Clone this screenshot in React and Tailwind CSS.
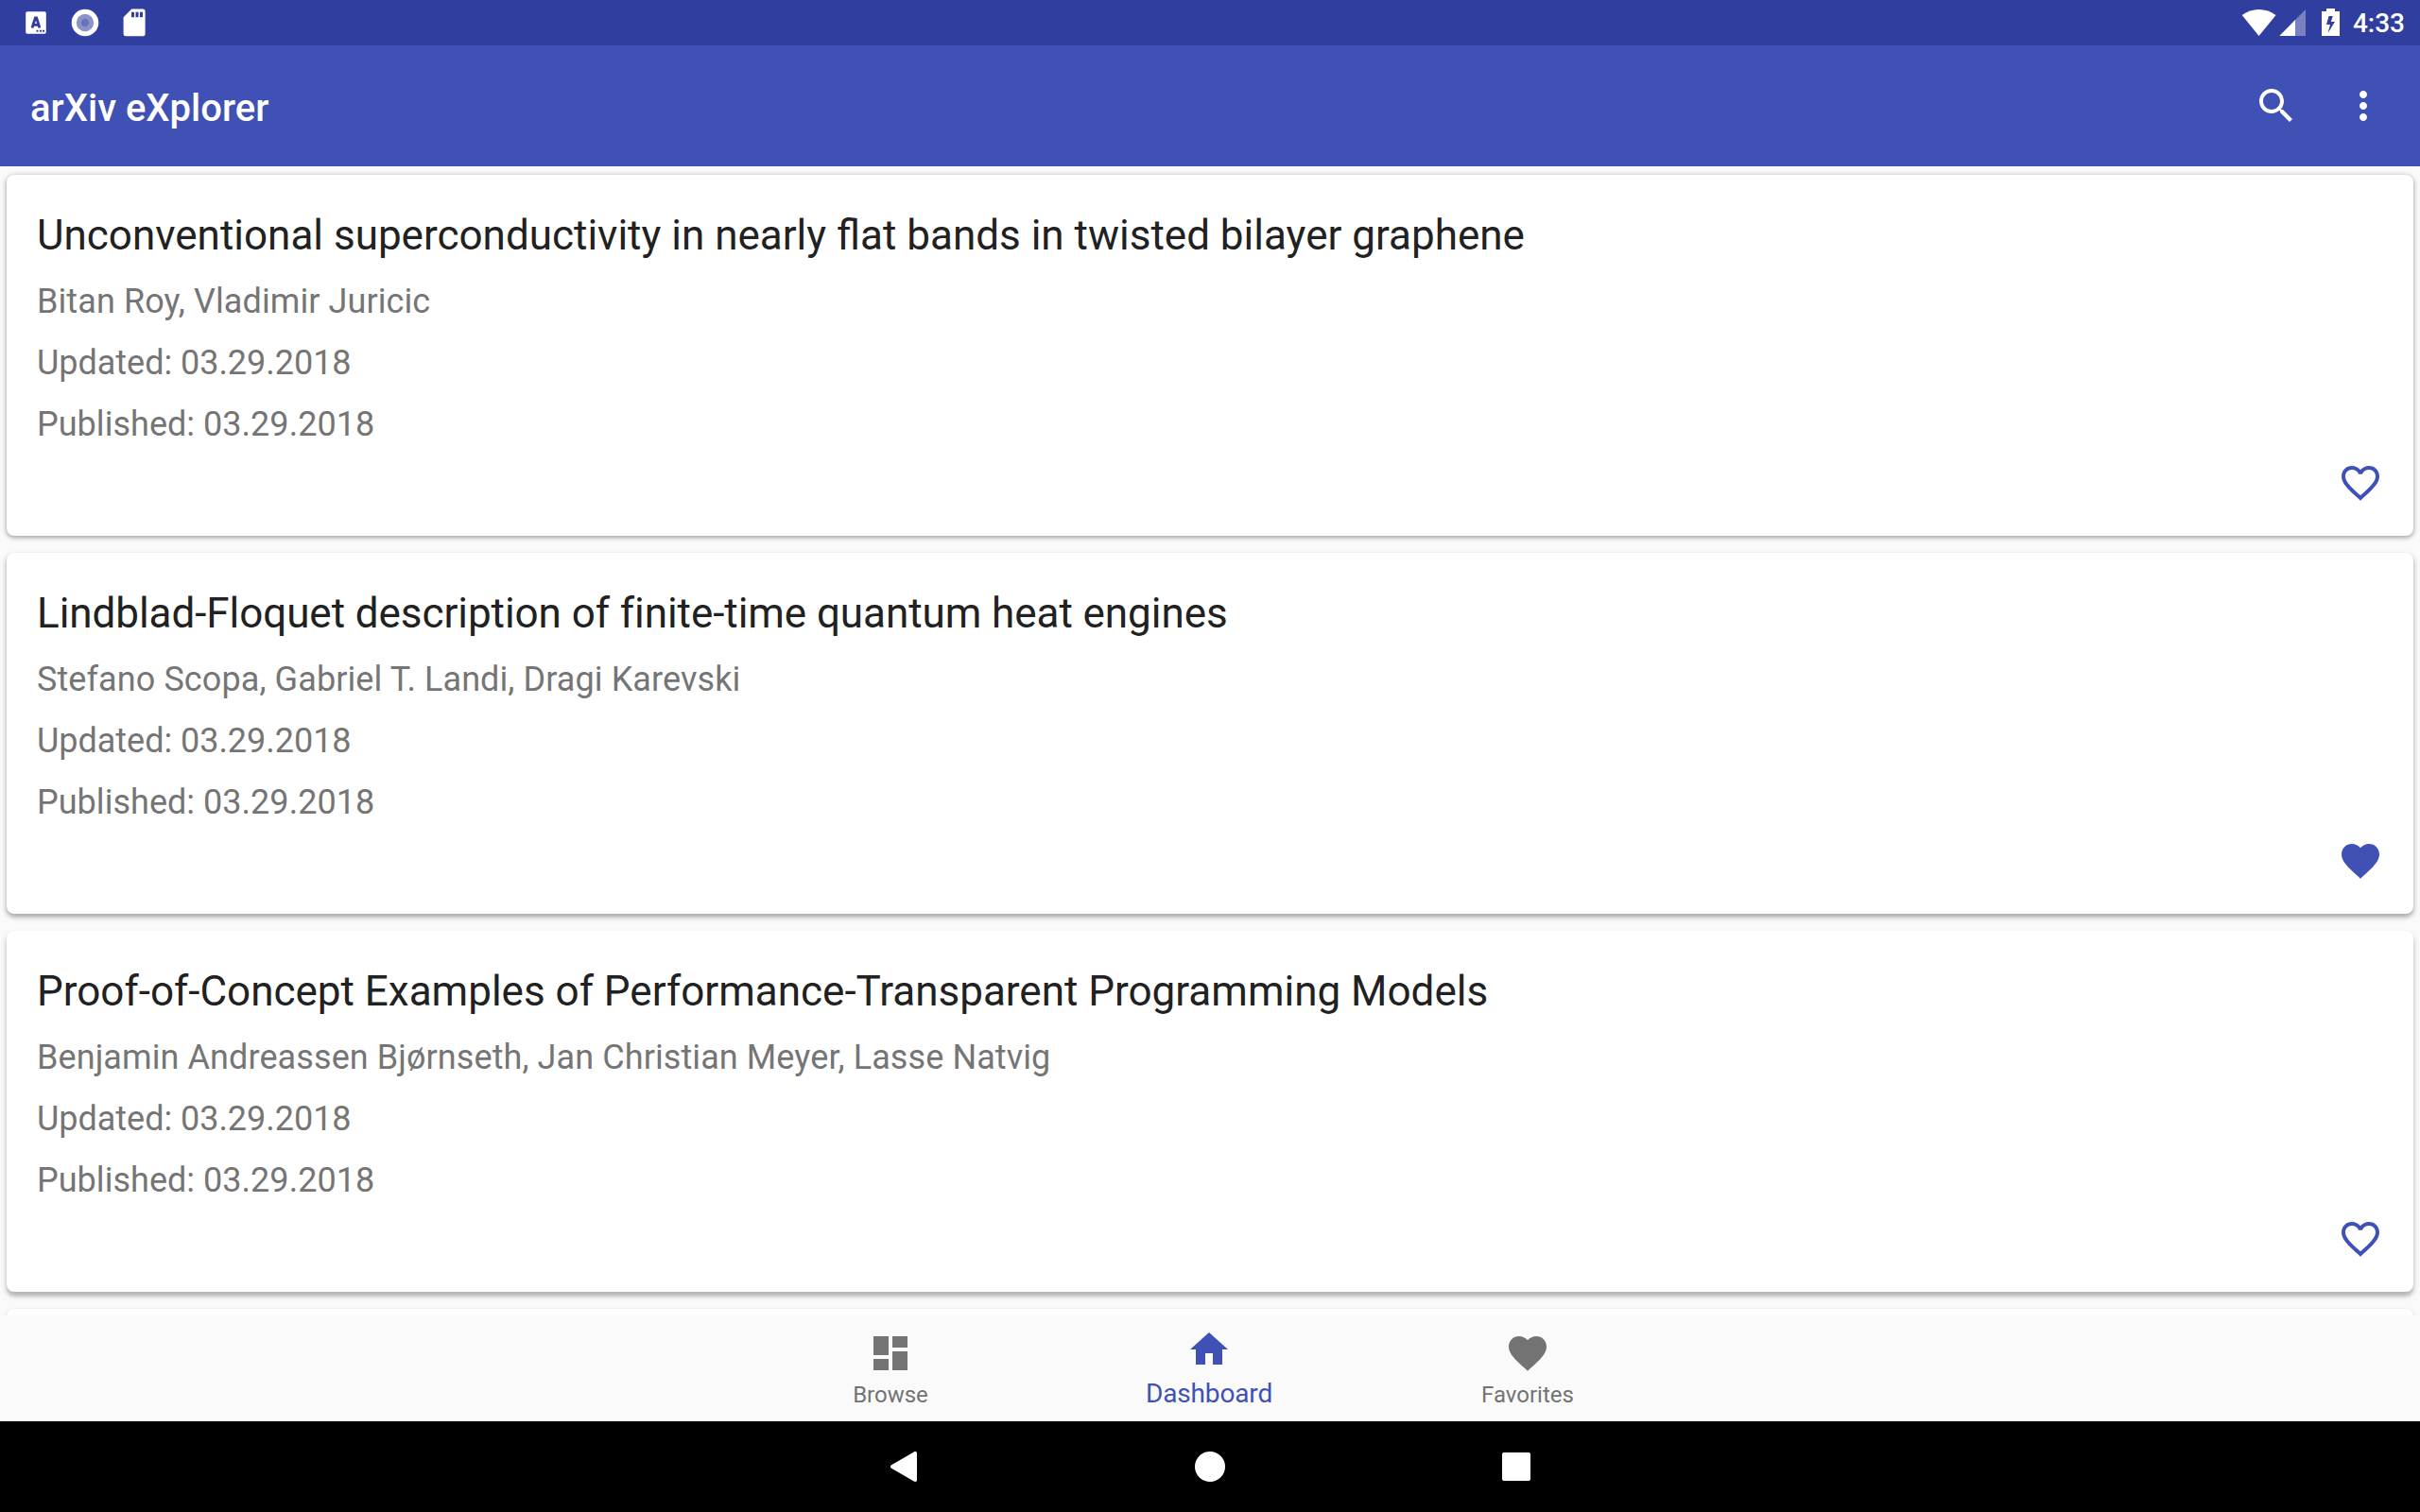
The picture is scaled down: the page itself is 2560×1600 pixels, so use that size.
const papers = [
  {
    title: "Unconventional superconductivity in nearly flat bands in twisted bilayer graphene",
    authors: "Bitan Roy, Vladimir Juricic",
    favorite: false,
    titleTracking: "",
    shadow: "shadow-[0_1px_6px_rgba(0,0,0,0.26),0_2px_4px_rgba(0,0,0,0.18)]",
  },
  {
    title: "Lindblad-Floquet description of finite-time quantum heat engines",
    authors: "Stefano Scopa, Gabriel T. Landi, Dragi Karevski",
    favorite: true,
    titleTracking: "tracking-[-0.06px]",
    shadow: "shadow-[0_3px_6px_rgba(0,0,0,0.24),0_3px_4px_rgba(0,0,0,0.16)]",
  },
  {
    title: "Proof-of-Concept Examples of Performance-Transparent Programming Models",
    authors: "Benjamin Andreassen Bjørnseth, Jan Christian Meyer, Lasse Natvig",
    favorite: false,
    titleTracking: "",
    shadow: "shadow-[0_4px_6px_rgba(0,0,0,0.22),0_5px_3px_rgba(0,0,0,0.10)]",
  },
];

const HEART =
  "M12 21.35l-1.45-1.32C5.4 15.36 2 12.28 2 8.5 2 5.42 4.42 3 7.5 3c1.74 0 3.41.81 4.5 2.09C13.09 3.81 14.76 3 16.5 3 19.58 3 22 5.42 22 8.5c0 3.78-3.4 6.86-8.55 11.54L12 21.35z";
const HEART_OUTLINE =
  "M16.5 3c-1.74 0-3.41.81-4.5 2.09C10.91 3.81 9.24 3 7.5 3 4.42 3 2 5.42 2 8.5c0 3.78 3.4 6.86 8.55 11.54L12 21.35l1.45-1.32C18.6 15.36 22 12.28 22 8.5 22 5.42 19.58 3 16.5 3zm-4.4 15.55l-.1.1-.1-.1C7.14 14.24 4 11.39 4 8.5 4 6.5 5.5 5 7.5 5c1.54 0 3.04.99 3.57 2.36h1.87C13.46 5.99 14.96 5 16.5 5c2 0 3.5 1.5 3.5 3.5 0 2.89-3.14 5.74-7.9 10.05z";
const DASHBOARD = "M3 13h8V3H3v10zm0 8h8v-6H3v6zm10 0h8V11h-8v10zm0-18v6h8V3h-8z";
const HOME = "M10 20v-6h4v6h5v-8h3L12 3 2 12h3v8z";
const SEARCH =
  "M15.5 14h-.79l-.28-.27C15.41 12.59 16 11.11 16 9.5 16 5.91 13.09 3 9.5 3S3 5.91 3 9.5 5.91 16 9.5 16c1.61 0 3.09-.59 4.23-1.57l.27.28v.79l5 4.99L20.49 19l-4.99-5zm-6 0C7.01 14 5 11.99 5 9.5S7.01 5 9.5 5 14 7.01 14 9.5 11.99 14 9.5 14z";
const MORE =
  "M12 8c1.1 0 2-.9 2-2s-.9-2-2-2-2 .9-2 2 .9 2 2 2zm0 2c-1.1 0-2 .9-2 2s.9 2 2 2 2-.9 2-2-.9-2-2-2zm0 6c-1.1 0-2 .9-2 2s.9 2 2 2 2-.9 2-2-.9-2-2-2z";

function Icon({ d, className = "" }) {
  return (
    <svg viewBox="0 0 24 24" fill="currentColor" className={`size-12 shrink-0 ${className}`}>
      <path d={d} />
    </svg>
  );
}

function StatusBar() {
  return (
    <div className="flex h-12 shrink-0 items-center justify-between bg-[#303f9f] text-white">
      <svg viewBox="0 0 160 48" className="h-12 w-40" fill="currentColor">
        <path
          fillRule="evenodd"
          d="M29 12.3h18a1.8 1.8 0 0 1 1.8 1.8V34a1.8 1.8 0 0 1-1.8 1.8H29a1.8 1.8 0 0 1-1.8-1.8V14.100a1.8 1.8 0 0 1 1.800-1.800zM38.500 31.800h2v2h-2zM42 31.800h2v2h-2zM45 31.800h2v2h-2z"
        />
        <path d="M34 29.500l3.400-10.500h1.200l3.400 10.500M35.500 26.300h5.200" fill="none" stroke="#303f9f" strokeWidth="2.800" />
        <circle cx="90" cy="24" r="14.300" />
        <circle cx="90" cy="24" r="9.200" fill="#8a93ca" />
        <circle cx="90" cy="24" r="4.200" fill="#6872b8" />
        <path
          fillRule="evenodd"
          d="M139.300 9.600h11.800a2.500 2.500 0 0 1 2.500 2.500v23.700a2.500 2.500 0 0 1-2.500 2.500h-18a2.500 2.500 0 0 1-2.500-2.500V18.200zM139 12.800v5.400h3v-5.400zM143.500 12.800v5.400h3v-5.400zM148 12.800v5.400h3v-5.400z"
        />
      </svg>
      <div className="flex items-center pr-4">
        <svg viewBox="0 0 116 48" className="h-12 w-[116px]" fill="currentColor">
          <path d="M1.700 16C12 7.900 27.300 7.900 37.600 16L19.600 38z" />
          <path d="M69 10v28H58V21z" opacity="0.35" />
          <path d="M58 21v17H41.300z" />
          <path
            fillRule="evenodd"
            d="M91 9h9v3h5v26H86V12h5zM93.500 17L91 26h4l-2.500 9L100 23h-4.200l2-6z"
          />
        </svg>
        <span className="ml-[3px] pt-0.5 text-[28px] leading-[46px] font-medium">4:33</span>
      </div>
    </div>
  );
}

function AppBar() {
  return (
    <header className="flex h-32 shrink-0 items-center justify-between bg-[#3f51b5] pr-9 pl-8 text-white">
      <h1 className="pt-1.5 text-[40px] leading-none font-medium">arXiv eXplorer</h1>
      <div className="flex gap-11">
        <Icon d={SEARCH} />
        <Icon d={MORE} />
      </div>
    </header>
  );
}

function PaperCard({ paper }) {
  return (
    <article className={`flex h-[382px] shrink-0 flex-col rounded-lg bg-white px-8 pt-[38px] ${paper.shadow}`}>
      <h2 className={`text-[44px] leading-[52px] text-[#212121] ${paper.titleTracking}`}>{paper.title}</h2>
      <div className="mt-3 text-[36px] leading-[65px] text-[#757575]">
        <p className="tracking-[0.09px]">{paper.authors}</p>
        <p className="tracking-[-0.03px]">Updated: 03.29.2018</p>
        <p className="tracking-[0.03px]">Published: 03.29.2018</p>
      </div>
      <Icon
        d={paper.favorite ? HEART : HEART_OUTLINE}
        className="mt-[5px] self-end text-[#3f51b5]"
      />
    </article>
  );
}

function BottomNav() {
  return (
    <nav className="flex h-28 shrink-0 justify-center bg-[#fafafa] pr-0.5 text-[#737373]">
      <div className="flex w-[337px] flex-col items-center pt-4">
        <Icon d={DASHBOARD} />
        <span className="mt-1 text-[24px] leading-8">Browse</span>
      </div>
      <div className="flex w-[337px] flex-col items-center pt-3 text-[#3f51b5]">
        <Icon d={HOME} />
        <span className="mt-[7px] text-[28px] leading-8 tracking-[-0.15px]">Dashboard</span>
      </div>
      <div className="flex w-[337px] flex-col items-center pt-4">
        <Icon d={HEART} />
        <span className="mt-1 text-[24px] leading-8">Favorites</span>
      </div>
    </nav>
  );
}

function SystemNav() {
  return (
    <div className="flex h-24 shrink-0 items-center justify-center gap-[292px] bg-black text-white">
      <svg viewBox="0 0 32 32" className="size-8" fill="currentColor">
        <path d="M3 14.200L26.800.4C28.600-.4 30 .3 30 1.700V30.300c0 1.400-1.400 2.100-3.200 1.300L3 17.800c-1.500-1-1.500-2.600 0-3.600z" />
      </svg>
      <div className="size-8 rounded-full bg-white" />
      <div className="flex size-8 items-center justify-center">
        <div className="size-[30px] rounded-[2px] bg-white" />
      </div>
    </div>
  );
}

export default function App() {
  return (
    <div className="flex h-[1600px] w-[2560px] flex-col overflow-hidden bg-[#fafafa] font-['Roboto',sans-serif]">
      <StatusBar />
      <AppBar />
      <main className="flex min-h-0 flex-1 flex-col gap-[18px] overflow-hidden px-[7px] pt-[9px]">
        {papers.map((paper) => (
          <PaperCard key={paper.title} paper={paper} />
        ))}
        <div className="h-10 shrink-0 rounded-t-lg bg-white shadow-[0_2px_5px_rgba(0,0,0,0.2)]" />
      </main>
      <BottomNav />
      <SystemNav />
    </div>
  );
}
